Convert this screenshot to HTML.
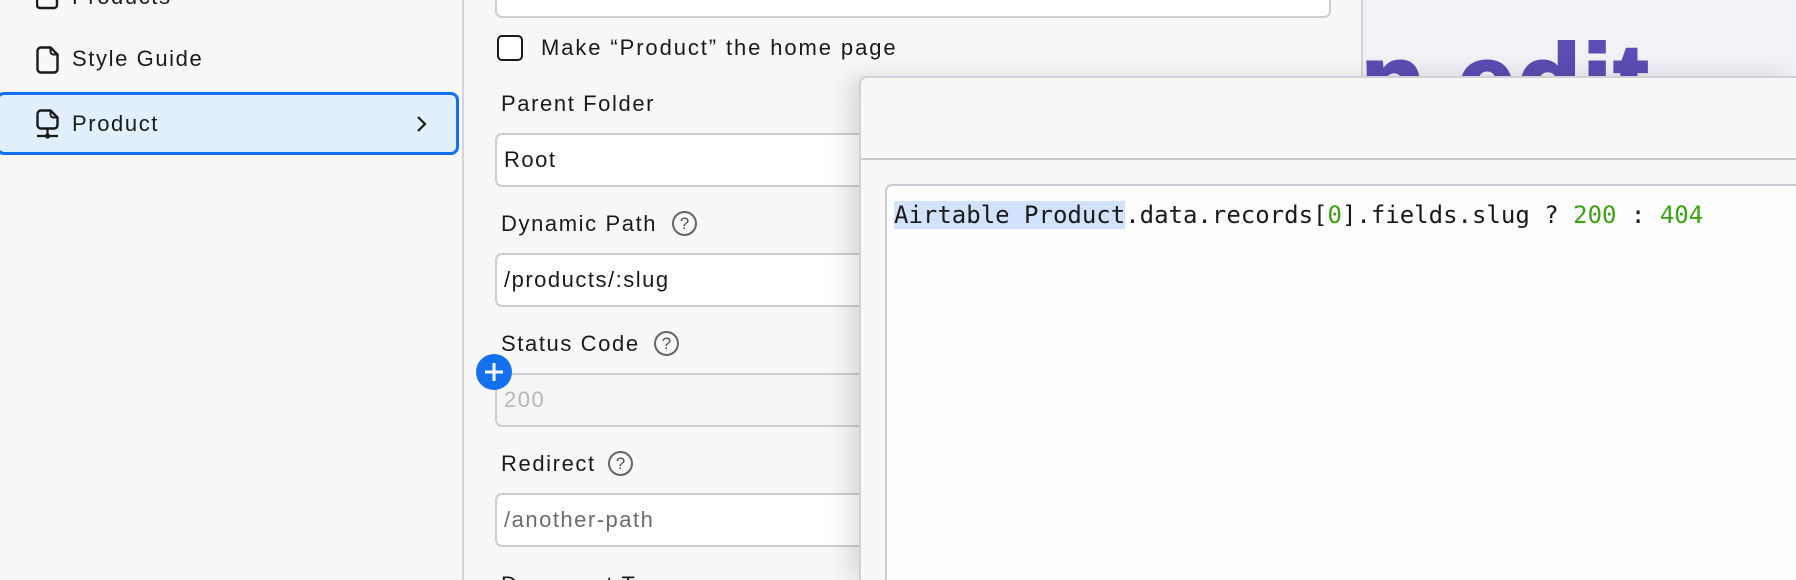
<!DOCTYPE html>
<html style="width:1796px;height:580px;overflow:hidden"><head><meta charset="utf-8"><style>
*{box-sizing:border-box;margin:0;padding:0}
body{width:1796px;height:580px;overflow:hidden;position:relative;background:#f8f8f8;font-family:"Liberation Sans",sans-serif;color:#1a1a1a}
.abs{position:absolute}
.side{left:0;top:0;width:464px;height:580px;background:#f8f8f8;border-right:2px solid #d4d4d8}
.txt{font-size:22px;letter-spacing:1.6px;line-height:26px}
.input{position:absolute;left:495px;width:836px;height:54px;background:#fff;border:2px solid #ccced3;border-radius:7px;font-size:22px;padding-left:7px;line-height:50px;letter-spacing:1.5px}
.lbl{position:absolute;left:501px;font-size:22px;line-height:26px;letter-spacing:1.6px}
.help{position:absolute;width:25px;height:25px;border:2px solid #666;border-radius:50%;font-size:17px;line-height:21px;text-align:center;color:#555}
#wrap{position:absolute;left:0;top:0;width:1796px;height:580px;overflow:hidden}
</style></head><body><div id="wrap">
<div class="abs side"></div>
<div class="abs" style="left:0;top:0;width:200px;height:12px;overflow:hidden">
<svg class="abs" style="left:36px;top:-20px" width="24" height="30" viewBox="0 0 24 30"><path d="M4 2h10l7 7v16a3 3 0 0 1-3 3H4a3 3 0 0 1-3-3V5a3 3 0 0 1 3-3z" fill="none" stroke="#1a1a1a" stroke-width="2.4"/></svg>
<div class="abs txt" style="left:72px;top:-16px">Products</div>
</div>
<svg class="abs" style="left:36px;top:46px" width="24" height="28" viewBox="0 0 24 28"><path d="M5 1.5h9.5l7 7V23a3.5 3.5 0 0 1-3.5 3.5H5A3.5 3.5 0 0 1 1.5 23V5A3.5 3.5 0 0 1 5 1.5z" fill="none" stroke="#1a1a1a" stroke-width="2.4"/><path d="M14.5 1.5v4a3 3 0 0 0 3 3h4" fill="none" stroke="#1a1a1a" stroke-width="2"/></svg>
<div class="abs txt" style="left:72px;top:46px">Style Guide</div>
<div class="abs" style="left:-4px;top:92px;width:463px;height:63px;background:#e1effe;border:3px solid #1570ef;border-radius:8px"></div>
<svg class="abs" style="left:36px;top:109px" width="24" height="32" viewBox="0 0 24 32"><path d="M5 1.5h9.5l7 7V16a3.5 3.5 0 0 1-3.5 3.5H5A3.5 3.5 0 0 1 1.5 16V5A3.5 3.5 0 0 1 5 1.5z" fill="none" stroke="#1a1a1a" stroke-width="2.4"/><path d="M14.5 1.5v4a3 3 0 0 0 3 3h4" fill="none" stroke="#1a1a1a" stroke-width="2"/><path d="M11.5 19.5v6M1 27h21" stroke="#1a1a1a" stroke-width="2.2"/><circle cx="11.5" cy="27" r="2.6" fill="#1a1a1a"/></svg>
<div class="abs txt" style="left:72px;top:111px">Product</div>
<svg class="abs" style="left:414px;top:115px" width="14" height="18" viewBox="0 0 14 18"><path d="M4 2l7 7-7 7" fill="none" stroke="#1a1a1a" stroke-width="2.2"/></svg>

<div class="abs" style="left:1361px;top:0;width:435px;height:580px;background:#f1f1f6;border-left:2px solid #d4d4d8;overflow:hidden">
<div class="abs" style="left:-2px;top:22px;font-size:104px;font-weight:bold;color:#5a4db3;line-height:120px;white-space:nowrap;-webkit-text-stroke:3px #5a4db3;letter-spacing:2px">n edit</div>
</div>

<div class="abs" style="left:495px;top:0;width:836px;height:20px;overflow:hidden"><div class="input" style="left:0;top:-36px">Product</div></div>
<div class="abs" style="left:497px;top:35px;width:26px;height:26px;border:2.5px solid #1a1a1a;border-radius:5px;background:#fff"></div>
<div class="abs txt" style="left:541px;top:35px;letter-spacing:1.9px">Make “Product” the home page</div>
<div class="lbl" style="top:91px">Parent Folder</div>
<div class="input" style="top:133px">Root</div>
<div class="lbl" style="top:211px">Dynamic Path</div>
<div class="help" style="left:672px;top:211px">?</div>
<div class="input" style="top:253px">/products/:slug</div>
<div class="lbl" style="top:331px">Status Code</div>
<div class="help" style="left:654px;top:331px">?</div>
<div class="input" style="top:373px;background:#f5f5f5;color:#b8b8bc">200</div>
<div class="abs" style="left:476px;top:354px;width:36px;height:36px;border-radius:50%;background:#1570ef"></div>
<svg class="abs" style="left:476px;top:354px" width="36" height="36"><path d="M18 9v18M9 18h18" stroke="#fff" stroke-width="3"/></svg>
<div class="lbl" style="top:451px">Redirect</div>
<div class="help" style="left:608px;top:451px">?</div>
<div class="input" style="top:493px;color:#6b6b70">/another-path</div>
<div class="abs" style="left:501px;top:572px;width:300px;height:8px;overflow:hidden"><div class="lbl" style="left:0;top:0">Document Type</div></div>

<div class="abs" style="left:859px;top:76px;width:937px;height:504px;background:#f8f8f8;border:2px solid #cfd1d6;border-right:0;border-bottom:0;border-radius:8px 0 0 0;box-shadow:-10px 0 24px rgba(0,0,0,0.13);overflow:hidden">
<div class="abs" style="left:0;top:80px;width:100%;height:2px;background:#c9ccd2"></div>
<div class="abs" style="left:24px;top:106px;width:913px;height:398px;background:#fefefe;border:2px solid #c9ccd2;border-right:0;border-bottom:0;border-radius:7px 0 0 0">
<div class="abs" style="left:7px;top:16px;font-family:'DejaVu Sans Mono','Liberation Mono',monospace;font-size:24px;line-height:27px;white-space:pre;color:#1a1a1a"><span style="background:#d3e2fb">Airtable Product</span>.data.records[<span style="color:#3aa30f">0</span>].fields.slug ? <span style="color:#3aa30f">200</span> : <span style="color:#3aa30f">404</span></div>
</div>
</div>
</div></body></html>
